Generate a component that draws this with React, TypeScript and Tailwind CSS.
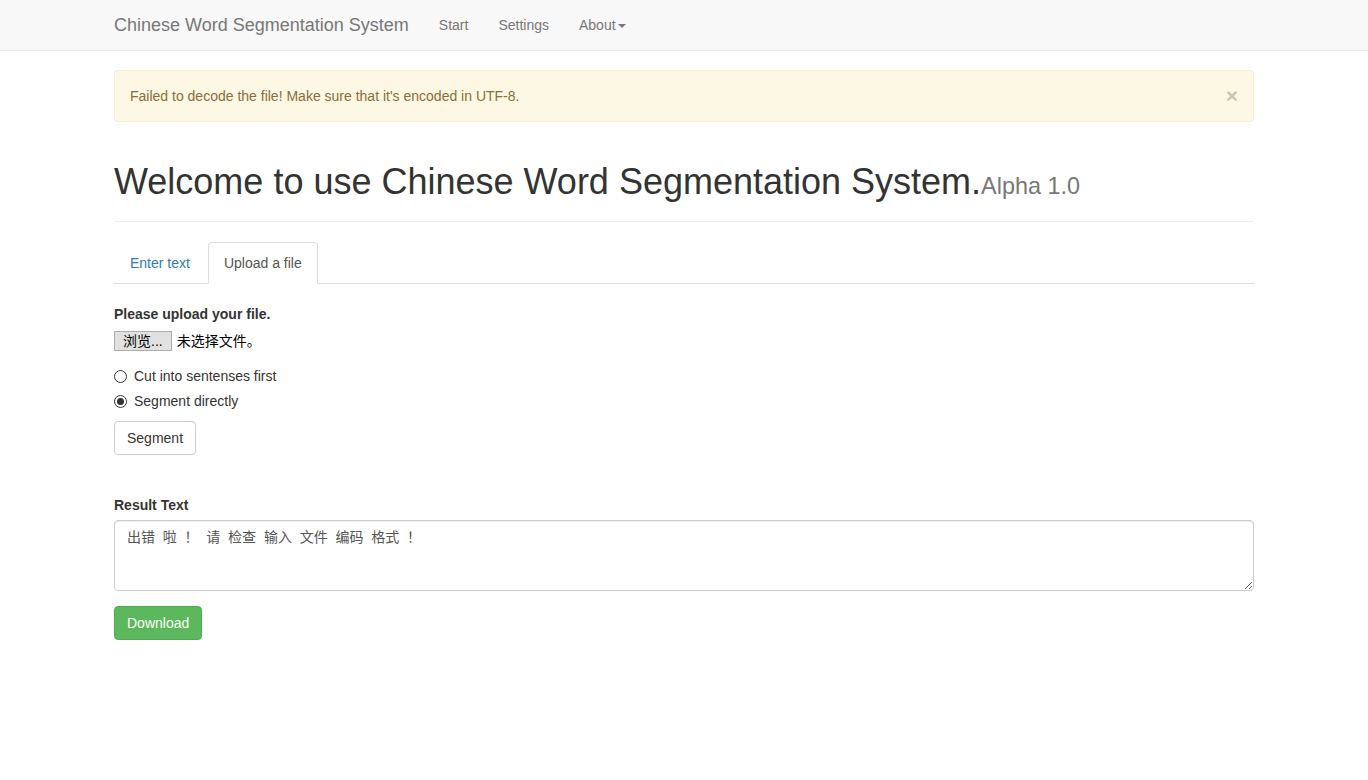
import React, { useState } from "react";

const SANS = "font-['Liberation_Sans','Noto_Sans_CJK_SC',Arial,sans-serif]";

function Radio(props: { checked: boolean; label: string; onPick: () => void }) {
  return (
    <label
      className="flex h-5 cursor-pointer items-center text-[14px] text-[#333]"
      onClick={props.onPick}
    >
      <span className="mr-[7px] flex h-[13px] w-[13px] items-center justify-center rounded-full border border-[#333] bg-white">
        {props.checked && <span className="h-[7px] w-[7px] rounded-full bg-[#333]" />}
      </span>
      {props.label}
    </label>
  );
}

export default function App() {
  const [tab, setTab] = useState<"text" | "file">("file");
  const [mode, setMode] = useState<"cut" | "direct">("direct");
  const [showAlert, setShowAlert] = useState(true);

  return (
    <div className={`min-h-screen bg-white ${SANS} text-[14px] leading-5 text-[#333]`}>
      {/* navbar */}
      <nav className="h-[51px] border-b border-[#e7e7e7] bg-[#f8f8f8]">
        <div className="mx-auto flex h-[50px] w-[1140px] items-center">
          <a className="pr-[15px] text-[18px] leading-5 text-[#777]" href="#">
            Chinese Word Segmentation System
          </a>
          <a className="px-[15px] text-[#777]" href="#">
            Start
          </a>
          <a className="px-[15px] text-[#777]" href="#">
            Settings
          </a>
          <a className="flex items-center px-[15px] text-[#777]" href="#">
            About
            <span className="ml-[2px] mt-[2px] h-0 w-0 border-x-[4px] border-t-[4px] border-x-transparent border-t-[#777]" />
          </a>
        </div>
      </nav>

      <div className="mx-auto w-[1140px] pt-[19px]">
        {showAlert && (
          <div className="flex h-[52px] items-center justify-between rounded border border-[#faebcc] bg-[#fcf8e3] pl-[15px] pr-[15px] text-[#8a6d3b]">
            <span>Failed to decode the file! Make sure that it&apos;s encoded in UTF-8.</span>
            <button
              type="button"
              onClick={() => setShowAlert(false)}
              className="mt-[-2px] text-[21px] font-bold leading-none text-black opacity-20"
            >
              ×
            </button>
          </div>
        )}

        {/* header */}
        <div className="mt-10 border-b border-[#eee] pb-[5px]">
          <h1 className="mb-[10px] text-[36px] leading-[40px] text-[#333]">
            Welcome to use Chinese Word Segmentation System.
            <span className="text-[23.4px] text-[#777]">Alpha 1.0</span>
          </h1>
        </div>

        {/* tabs */}
        <div className="mt-5 flex h-[42px] border-b border-[#ddd]">
          <button
            type="button"
            onClick={() => setTab("text")}
            className={`mr-[2px] h-[42px] rounded-t border px-[15px] ${
              tab === "text"
                ? "border-[#ddd] border-b-white bg-white text-[#555]"
                : "border-transparent text-[#337ab7]"
            }`}
          >
            Enter text
          </button>
          <button
            type="button"
            onClick={() => setTab("file")}
            className={`mr-[2px] h-[42px] rounded-t border px-[15px] ${
              tab === "file"
                ? "border-[#ddd] border-b-white bg-white text-[#555]"
                : "border-transparent text-[#337ab7]"
            }`}
          >
            Upload a file
          </button>
        </div>

        {/* upload form */}
        <div className="pt-5">
          <div className="mb-[7px] font-bold">Please upload your file.</div>
          <div className="flex items-center">
            <span className="flex h-[20px] items-center border border-[#adadad] bg-[#e1e1e1] px-[8px] text-[14px] text-black">
              浏览...
            </span>
            <span className="ml-[5px] text-[14px] text-black">未选择文件。</span>
          </div>

          <div className="mt-[15px] flex flex-col gap-[5px]">
            <Radio
              checked={mode === "cut"}
              label="Cut into sentenses first"
              onPick={() => setMode("cut")}
            />
            <Radio
              checked={mode === "direct"}
              label="Segment directly"
              onPick={() => setMode("direct")}
            />
          </div>

          <button
            type="button"
            className="mt-[10px] h-[34px] rounded border border-[#ccc] bg-white px-3 text-[#333]"
          >
            Segment
          </button>
        </div>

        {/* result */}
        <div className="mt-[40px]">
          <div className="mb-[5px] font-bold">Result Text</div>
          <textarea
            rows={3}
            readOnly
            defaultValue="出错  啦  ！  请  检查  输入  文件  编码  格式  ！"
            className={`block h-[71px] w-full resize-y rounded border border-[#ccc] px-3 py-[6px] ${SANS} text-[14px] leading-5 text-[#555] shadow-[inset_0_1px_1px_rgba(0,0,0,0.075)] outline-none`}
          />
          <button
            type="button"
            className="mt-[15px] h-[34px] rounded border border-[#4cae4c] bg-[#5cb85c] px-3 text-white"
          >
            Download
          </button>
        </div>
      </div>
    </div>
  );
}
